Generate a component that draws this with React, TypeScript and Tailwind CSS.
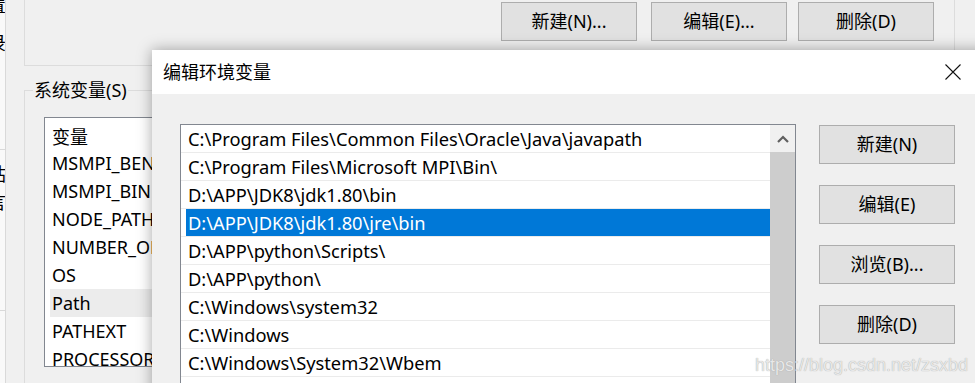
import React from "react";

const font = "font-['Noto_Sans','Noto_Sans_CJK_SC',sans-serif]";

const varNames = ["MSMPI_BENCHMARKS", "MSMPI_BIN", "NODE_PATH", "NUMBER_OF_PROCESSORS", "OS", "Path", "PATHEXT", "PROCESSOR_ARCHITECTURE"];

const paths = [
  "C:\\Program Files\\Common Files\\Oracle\\Java\\javapath",
  "C:\\Program Files\\Microsoft MPI\\Bin\\",
  "D:\\APP\\JDK8\\jdk1.80\\bin",
  "D:\\APP\\JDK8\\jdk1.80\\jre\\bin",
  "D:\\APP\\python\\Scripts\\",
  "D:\\APP\\python\\",
  "C:\\Windows\\system32",
  "C:\\Windows",
  "C:\\Windows\\System32\\Wbem",
  "C:\\Windows\\System32\\WindowsPowerShell\\v1.0\\",
];

function WinButton({ label, className = "" }: { label: string; className?: string }) {
  return (
    <div
      className={`h-[39px] w-[136px] shrink-0 flex items-center justify-center bg-[#e1e1e1] border border-[#adadad] text-[18px] text-black ${className}`}
    >
      {label}
    </div>
  );
}

export default function App() {
  return (
    <div className={`relative w-[975px] h-[383px] overflow-hidden bg-[#f0f0f0] ${font} text-black`}>
      {/* background window */}
      <div className="flex h-full">
        {/* cut-off strip on the far left */}
        <div className="w-[6px] shrink-0 h-full bg-[#f9f9f9] border-r border-[#d9d9d9] overflow-hidden flex flex-col text-[18px] leading-none">
          <span className="ml-[-12px] mt-[-4px]">置</span>
          <span className="ml-[-12px] mt-[20px]">录</span>
          <div className="mt-[97px] h-px w-full bg-[#d9d9d9]" />
          <span className="ml-[-12px] mt-[15px]">站</span>
          <span className="ml-[-12px] mt-[10px]">言</span>
          <div className="mt-[99px] h-px w-full bg-[#d9d9d9]" />
        </div>

        <div className="flex-1 flex flex-col pl-[18px]">
          {/* user variables group (bottom part) */}
          <div className="mt-[-10px] h-[76px] w-[931px] shrink-0 border-l border-r border-b border-[#dcdcdc] flex items-start pt-[12px] pl-[476px]">
            <WinButton label="新建(N)..." />
            <WinButton label="编辑(E)..." className="ml-[14px]" />
            <WinButton label="删除(D)" className="ml-[11px]" />
          </div>

          {/* system variables group */}
          <div className="relative mt-[24px] flex-1 w-[931px] border-l border-t border-[#dcdcdc] pl-[19px] pt-[26px]">
            <span className="absolute left-[8px] top-[-12px] bg-[#f0f0f0] px-[1px] text-[18px] leading-[22px]">系统变量(S)</span>
            <div className="w-[300px] h-[250px] bg-white border border-[#828790] overflow-hidden">
              <div className="h-[31px] pl-[7px] pt-[8px] flex items-center text-[18px]">变量</div>
              {varNames.map((n) => (
                <div
                  key={n}
                  className={`h-[28px] ml-[5px] pl-[2px] flex items-center text-[18px] whitespace-nowrap ${n === "Path" ? "bg-[#ececec]" : ""}`}
                >
                  {n}
                </div>
              ))}
            </div>
          </div>
        </div>
      </div>

      {/* edit environment variable dialog */}
      <div className="absolute left-[152px] top-[50px] w-[860px] h-[360px] bg-[#f0f0f0] shadow-[0_0_14px_rgba(0,0,0,0.35)] flex flex-col">
        <div className="h-[44px] shrink-0 bg-white flex items-center justify-between pl-[11px] pr-[50px]">
          <span className="text-[18px]">编辑环境变量</span>
          <svg width="16" height="16" viewBox="0 0 16 16" className="mr-[1px]">
            <path d="M0.5 0.5 L15.5 15.5 M15.5 0.5 L0.5 15.5" stroke="#111" strokeWidth="1.1" fill="none" />
          </svg>
        </div>

        <div className="flex pl-[28px] pt-[30px]">
          {/* path list */}
          <div className="w-[616px] h-[300px] shrink-0 bg-white border border-[#828790] flex overflow-hidden">
            <div className="flex-1 flex flex-col">
              {paths.map((p, i) => (
                <div key={p} className="h-[28px] shrink-0 border-b border-[#ebebeb] flex">
                  <div
                    className={`flex-1 flex items-center pl-[2px] ml-[5px] text-[18.3px] whitespace-nowrap ${i === 3 ? "bg-[#0078d7] text-white" : ""}`}
                  >
                    {p}
                  </div>
                </div>
              ))}
            </div>
            <div className="w-[25px] shrink-0 flex flex-col bg-[#f0f0f0]">
              <div className="h-[27px] shrink-0 flex items-center justify-center">
                <svg width="12" height="8" viewBox="0 0 12 8">
                  <path d="M1 7 L6 2 L11 7" stroke="#606060" strokeWidth="2.2" fill="none" />
                </svg>
              </div>
              <div className="flex-1 bg-[#cdcdcd]" />
            </div>
          </div>

          {/* right buttons */}
          <div className="ml-[23px] flex flex-col gap-[21px] pt-px">
            <WinButton label="新建(N)" />
            <WinButton label="编辑(E)" />
            <WinButton label="浏览(B)..." />
            <WinButton label="删除(D)" />
          </div>
        </div>
      </div>

      {/* watermark */}
      <div className="absolute left-[755px] top-[353px] text-[18px] leading-[24px] font-['Liberation_Sans',sans-serif] text-[#e8e8e8] [text-shadow:0_0_1px_#9a9a9a]">
        https://blog.csdn.net/zsxbd
      </div>
    </div>
  );
}
